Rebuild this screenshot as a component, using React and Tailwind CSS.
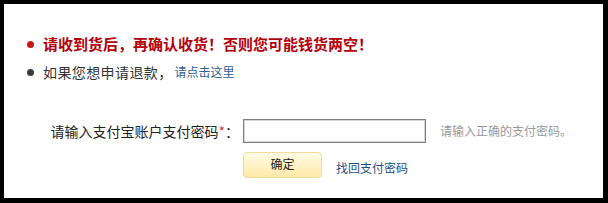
import React from 'react';

export default function App() {
  const font = { fontFamily: '"Noto Sans CJK SC", "Noto Sans", sans-serif' };

  return (
    <div className="w-[608px] h-[203px] bg-black pt-[4px] pl-[4px] pr-[5px] pb-[5px]" style={font}>
      <div className="w-full h-full bg-white pt-[26px]">
        {/* notices */}
        <ul>
          <li className="flex items-center h-[28px] pl-[23px]">
            <span className="w-[7px] h-[7px] rounded-full bg-[#c4161c] mr-[9px]"></span>
            <span className="text-[15px] font-bold text-[#b3000b]">请收到货后，再确认收货！否则您可能钱货两空！</span>
          </li>
          <li className="flex items-center h-[28px] pl-[23px]">
            <span className="w-[7px] h-[7px] rounded-full bg-[#3a3a3a] mr-[9px]"></span>
            <span className="text-[14px] tracking-[0.4px] text-[#333]">如果您想申请退款，</span>
            <a className="text-[12px] text-[#2f6090] ml-[2px]">请点击这里</a>
          </li>
        </ul>

        {/* password form */}
        <div className="flex items-center mt-[33px]">
          <label className="w-[235px] text-right text-[14px] text-[#222]">
            请输入支付宝账户支付密码<span className="text-[#e23a3a]">*</span>：
          </label>
          <input
            type="password"
            className="ml-[4px] w-[183px] h-[24px] border border-[#7f7f7f] shadow-[inset_0_0_0_1px_#d6d6d6] bg-white outline-none"
          />
          <span className="ml-[14px] text-[12px] text-[#999]">请输入正确的支付密码。</span>
        </div>

        <div className="flex items-center mt-[9px] pl-[239px]">
          <button className="w-[79px] h-[26px] rounded-[4px] border border-[#f2dc9a] bg-gradient-to-b from-[#fffbe6] to-[#fde9a6] text-[12px] text-[#222] pb-[3px]">
            确定
          </button>
          <a className="ml-[14px] mt-[6px] text-[12px] text-[#1f4f80]">找回支付密码</a>
        </div>
      </div>
    </div>
  );
}
